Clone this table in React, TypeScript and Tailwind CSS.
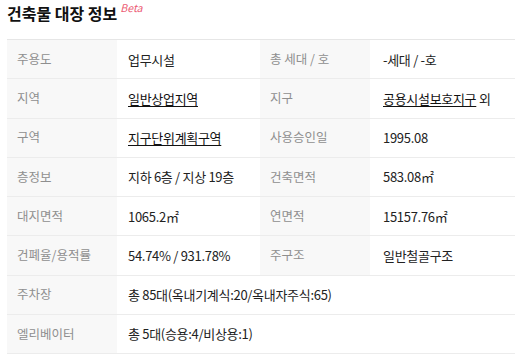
const rows: { label: string; value: React.ReactNode; label2?: string; value2?: React.ReactNode }[] = [
  { label: '주용도', value: '업무시설', label2: '총 세대 / 호', value2: '-세대 / -호' },
  {
    label: '지역',
    value: <a className="underline underline-offset-2 text-[#111]">일반상업지역</a>,
    label2: '지구',
    value2: (
      <span>
        <a className="underline underline-offset-2 text-[#111]">공용시설보호지구</a> 외
      </span>
    ),
  },
  {
    label: '구역',
    value: <a className="underline underline-offset-2 text-[#111]">지구단위계획구역</a>,
    label2: '사용승인일',
    value2: '1995.08',
  },
  { label: '층정보', value: '지하 6층 / 지상 19층', label2: '건축면적', value2: '583.08㎡' },
  { label: '대지면적', value: '1065.2㎡', label2: '연면적', value2: '15157.76㎡' },
  { label: '건폐율/용적률', value: '54.74% / 931.78%', label2: '주구조', value2: '일반철골구조' },
  { label: '주차장', value: '총 85대(옥내기계식:20/옥내자주식:65)' },
  { label: '엘리베이터', value: '총 5대(승용:4/비상용:1)' },
];

export default function App() {
  return (
    <div
      className="w-[519px] h-[359px] bg-white px-[7px] overflow-hidden"
      style={{ fontFamily: '"Noto Sans CJK KR", "Noto Sans", sans-serif' }}
    >
      <div className="h-[39px] flex items-start pt-[2px]">
        <h2 className="text-[16px] font-bold text-[#111] leading-[22px]">건축물 대장 정보</h2>
        <span className="ml-[3px] mt-[-1px] text-[10.5px] italic text-[#ec5a72] leading-[14px]">Beta</span>
      </div>

      <div className="w-[508px] border-t border-[#e6e6e6]">
        {rows.map((row, i) => (
          <div
            key={i}
            className="grid grid-cols-[110px_143px_110px_1fr] h-[39.25px] border-b border-[#ececec] text-[12.5px] leading-none"
          >
            <div className="bg-[#f8f8f8] flex items-center pl-[10px] text-[#8f8f8f]">{row.label}</div>
            {row.label2 ? (
              <>
                <div className="flex items-center pl-[11px] text-[#222] text-[13px] tracking-[-0.3px]">{row.value}</div>
                <div className="bg-[#f8f8f8] flex items-center pl-[10px] text-[#8f8f8f]">{row.label2}</div>
                <div className="flex items-center pl-[13px] text-[#222] text-[13px] tracking-[-0.3px]">{row.value2}</div>
              </>
            ) : (
              <div className="col-span-3 flex items-center pl-[11px] text-[#222] text-[13px] tracking-[-0.3px]">{row.value}</div>
            )}
          </div>
        ))}
      </div>
    </div>
  );
}
